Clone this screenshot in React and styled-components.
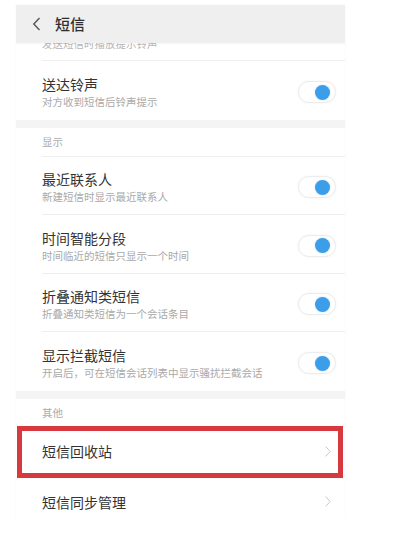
import React from "react";
import styled, { createGlobalStyle } from "styled-components";

const Global = createGlobalStyle`
  html, body { margin: 0; padding: 0; background: #ffffff; }
  body { font-family: "Noto Sans CJK SC", "Noto Sans", sans-serif; -webkit-font-smoothing: antialiased; }
`;

const Page = styled.div`
  padding: 5px 0 0 16px;
`;

const Phone = styled.div`
  width: 329px;
  height: 513px;
  background: #ffffff;
  display: flex;
  flex-direction: column;
  overflow: hidden;
  box-shadow: 0 0 1px rgba(0, 0, 0, 0.1);
`;

const Header = styled.div`
  height: 38px;
  flex: none;
  display: flex;
  align-items: center;
  padding-left: 16px;
  background: #efefef;
  box-shadow: 0 1px 2px rgba(0, 0, 0, 0.04);
  position: relative;
  z-index: 1;
`;

const Title = styled.div`
  margin-left: 14px;
  font-size: 15px;
  font-weight: 500;
  color: #2e2e2e;
  line-height: 20px;
`;

const Body = styled.div`
  flex: 1;
  overflow: hidden;
  display: flex;
  flex-direction: column;
`;

const Group = styled.div`
  background: #ffffff;
`;

const Band = styled.div`
  height: 8px;
  background: #f4f4f4;
  flex: none;
`;

const SectionTitle = styled.div`
  height: ${(p) => p.$h}px;
  margin-left: 26px;
  display: flex;
  align-items: center;
  font-size: 10.5px;
  color: #ababab;
  border-bottom: 1px solid #eeeeee;
  box-sizing: border-box;
`;

const Peek = styled.div`
  height: 18px;
  box-sizing: border-box;
  margin-left: 26px;
  overflow: hidden;
  border-bottom: 1px solid #eeeeee;
`;

const PeekText = styled.div`
  margin-top: -7px;
  font-size: 10.5px;
  line-height: 16px;
  color: #b5b5b5;
  white-space: nowrap;
`;

const RowWrap = styled.div`
  position: relative;
  &:last-child > div {
    border-bottom: none;
  }
`;

const Row = styled.div`
  height: ${(p) => p.$h}px;
  box-sizing: border-box;
  margin-left: 26px;
  padding-top: ${(p) => (p.$sub ? 4 : 0)}px;
  display: flex;
  align-items: center;
  border-bottom: 1px solid #eeeeee;
`;

const Texts = styled.div`
  flex: 1;
  display: flex;
  flex-direction: column;
  min-width: 0;
`;

const RowTitle = styled.div`
  font-size: 14px;
  line-height: 20px;
  color: #333333;
  white-space: nowrap;
`;

const RowSub = styled.div`
  font-size: 10.5px;
  line-height: 16px;
  color: #a9a9a9;
  white-space: nowrap;
`;

const Track = styled.div`
  width: 38px;
  height: 22px;
  margin-right: 9px;
  box-sizing: border-box;
  border-radius: 11px;
  border: 1px solid #ececec;
  background: #ffffff;
  box-shadow: 0 0 3px rgba(0, 0, 0, 0.05);
  display: flex;
  align-items: center;
  justify-content: ${(p) => (p.$on ? "flex-end" : "flex-start")};
  padding: 0 5px;
  flex: none;
`;

const Knob = styled.div`
  width: 15px;
  height: 15px;
  border-radius: 50%;
  background: ${(p) => (p.$on ? "#3c9de8" : "#d0d0d0")};
  box-shadow: 0 0 2px rgba(60, 157, 232, 0.35);
`;

const Chevron = styled.svg`
  width: 6px;
  height: 11px;
  margin-right: 14px;
  flex: none;
`;

const Highlight = styled.div`
  position: absolute;
  top: -1px;
  bottom: -1px;
  left: 1px;
  right: 2px;
  border: 5px solid #d8393f;
  pointer-events: none;
`;

const Switch = ({ on }) => (
  <Track $on={on}>
    <Knob $on={on} />
  </Track>
);

const ToggleRow = ({ title, sub }) => (
  <RowWrap>
    <Row $h={58.5} $sub>
      <Texts>
        <RowTitle>{title}</RowTitle>
        <RowSub>{sub}</RowSub>
      </Texts>
      <Switch on />
    </Row>
  </RowWrap>
);

const NavRow = ({ title, highlighted }) => (
  <RowWrap>
    <Row $h={50}>
      <Texts>
        <RowTitle>{title}</RowTitle>
      </Texts>
      <Chevron viewBox="0 0 6 11">
        <path d="M0.6 0.6 L5.2 5.5 L0.6 10.4" fill="none" stroke="#c6c6c6" strokeWidth="1" />
      </Chevron>
    </Row>
    {highlighted && <Highlight />}
  </RowWrap>
);

export default function App() {
  return (
    <>
      <Global />
      <Page>
        <Phone>
          <Header>
            <svg width="9" height="14" viewBox="0 0 9 14">
              <path d="M7.5 1 L1.8 7 L7.5 13" fill="none" stroke="#555" strokeWidth="1.4" />
            </svg>
            <Title>短信</Title>
          </Header>
          <Body>
            <Group>
              <Peek>
                <PeekText>发送短信时播放提示铃声</PeekText>
              </Peek>
              <ToggleRow title="送达铃声" sub="对方收到短信后铃声提示" />
            </Group>
            <Band />
            <Group>
              <SectionTitle $h={29}>显示</SectionTitle>
              <ToggleRow title="最近联系人" sub="新建短信时显示最近联系人" />
              <ToggleRow title="时间智能分段" sub="时间临近的短信只显示一个时间" />
              <ToggleRow title="折叠通知类短信" sub="折叠通知类短信为一个会话条目" />
              <ToggleRow title="显示拦截短信" sub="开启后，可在短信会话列表中显示骚扰拦截会话" />
            </Group>
            <Band />
            <Group>
              <SectionTitle $h={28}>其他</SectionTitle>
              <NavRow title="短信回收站" highlighted />
              <NavRow title="短信同步管理" />
            </Group>
          </Body>
        </Phone>
      </Page>
    </>
  );
}
